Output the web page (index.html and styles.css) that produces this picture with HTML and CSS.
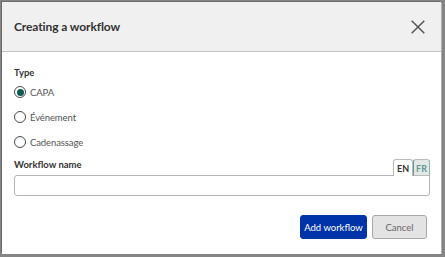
FILE: index.html
```html
<!DOCTYPE html>
<html lang="en">
<head>
  <meta charset="UTF-8">
  <title>Creating a workflow</title>
  <link rel="stylesheet" href="styles.css">
</head>
<body>
  <div class="modal">
    <header class="modal-header">
      <h2>Creating a workflow</h2>
      <button class="close" aria-label="Close">
        <svg width="14" height="14" viewBox="0 0 14 14"><path d="M0.7 0.7L13.3 13.3M13.3 0.7L0.7 13.3" stroke="#555" stroke-width="1.5" fill="none"/></svg>
      </button>
    </header>

    <div class="modal-body">
      <div class="field-label">Type</div>
      <div class="radios">
        <label class="radio"><span class="dot checked"></span>CAPA</label>
        <label class="radio"><span class="dot"></span>Événement</label>
        <label class="radio"><span class="dot"></span>Cadenassage</label>
      </div>

      <div class="name-row">
        <div class="field-label">Workflow name</div>
        <div class="langs">
          <span class="lang active">EN</span>
          <span class="lang">FR</span>
        </div>
      </div>
      <input class="text-input" type="text">
    </div>

    <footer class="modal-footer">
      <button class="btn primary">Add workflow</button>
      <button class="btn secondary">Cancel</button>
    </footer>
  </div>
</body>
</html>
```

FILE: styles.css
```css
body {
  margin: 0;
  background-color: #858585;
  font-family: Lato, "Open Sans", sans-serif;
  color: #333;
}

.modal {
  width: 439px;
  height: 252px;
  margin: 2px 0 0 2px;
  background-color: white;
  box-shadow: -1px -1px 0 #6b6b6b, 1px 1px 0 #b0b0b0;
  display: flex;
  flex-direction: column;
}

.modal-header {
  height: 49px;
  background-color: #f0f0f0;
  border-bottom: 1px solid #c4c4c4;
  display: flex;
  align-items: center;
  justify-content: space-between;
  padding: 0 16px 0 12px;
}

.modal-header h2 {
  margin: 0;
  font-size: 12px;
  font-weight: bold;
  color: #333;
  letter-spacing: -0.1px;
}

.close {
  border: none;
  background: none;
  padding: 0;
  width: 14px;
  height: 14px;
  display: flex;
}

.modal-body {
  padding: 15px 11px 0 12px;
}

.field-label {
  font-size: 9.5px;
  line-height: 12px;
  font-weight: bold;
  color: #333;
}

.radios {
  display: flex;
  flex-direction: column;
  gap: 9px;
  margin-top: 5px;
}

.radio {
  display: flex;
  align-items: center;
  font-size: 9.5px;
  color: #555;
  height: 16px;
  letter-spacing: -0.1px;
}

.dot {
  width: 10px;
  height: 10px;
  border: 1px solid #4a4a4a;
  border-radius: 50%;
  margin-right: 4px;
  position: relative;
}

.dot.checked::after {
  content: "";
  position: absolute;
  left: 1.5px;
  top: 1.5px;
  width: 7px;
  height: 7px;
  border-radius: 50%;
  background-color: #0c5a52;
}

.name-row {
  display: flex;
  justify-content: space-between;
  align-items: flex-end;
  margin-top: 9px;
}

.name-row .field-label {
  padding-bottom: 4px;
}

.langs {
  display: flex;
  position: relative;
  margin-bottom: -1px;
}

.lang {
  font-size: 9px;
  line-height: 11px;
  font-weight: bold;
  padding: 3px 3px 2px;
  border: 1px solid #bbb;
  border-bottom: none;
  border-radius: 3px 3px 0 0;
  background-color: white;
  color: #333;
}

.lang + .lang {
  background-color: #e3e7e6;
  color: #5e9c93;
  border-left: 1.5px solid #5e9c93;
  border-right-color: #8fb5ae;
  border-bottom: 1px solid #bbb;
  padding: 3px 2px 1px;
}

.text-input {
  display: block;
  width: 100%;
  height: 21px;
  box-sizing: border-box;
  border: 1px solid #b5b5b5;
  border-radius: 3px 0 3px 3px;
  margin: 0;
}

.modal-footer {
  margin-top: auto;
  display: flex;
  justify-content: flex-end;
  gap: 5px;
  padding: 0 14px 15px 0;
}

.btn {
  font-family: Lato, "Open Sans", sans-serif;
  font-size: 9.5px;
  height: 24px;
  padding: 0;
  white-space: nowrap;
  border-radius: 3px;
}

.primary {
  width: 67px;
  background-color: #0033a8;
  border: 1px solid #0033a8;
  color: white;
}

.secondary {
  width: 55px;
  background-color: #e3e3e3;
  border: 1px solid #a8a8a8;
  color: #666;
}
```
